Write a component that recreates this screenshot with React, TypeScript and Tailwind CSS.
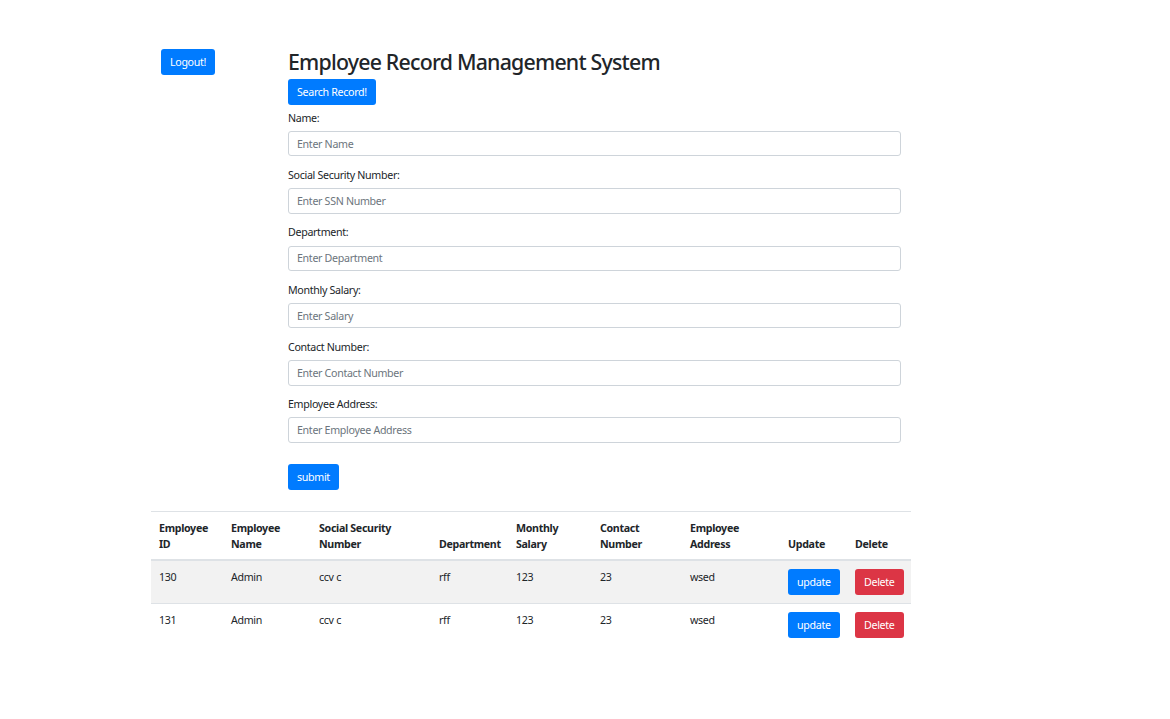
import React from "react";

const rows = [
  { id: "130", name: "Admin", ssn: "ccv c", dept: "rff", salary: "123", contact: "23", address: "wsed" },
  { id: "131", name: "Admin", ssn: "ccv c", dept: "rff", salary: "123", contact: "23", address: "wsed" },
];

const fields = [
  { label: "Name:", placeholder: "Enter Name" },
  { label: "Social Security Number:", placeholder: "Enter SSN Number" },
  { label: "Department:", placeholder: "Enter Department" },
  { label: "Monthly Salary:", placeholder: "Enter Salary" },
  { label: "Contact Number:", placeholder: "Enter Contact Number" },
  { label: "Employee Address:", placeholder: "Enter Employee Address" },
];

const btn =
  "block rounded-[3px] px-2 py-1 text-[10.67px] leading-4 text-white border border-transparent";

export default function App() {
  return (
    <div
      className="min-h-screen bg-white text-[#212529] text-[10.67px] leading-4 tracking-[-0.03em]"
      style={{ fontFamily: "'Segoe UI', 'Noto Sans', sans-serif" }}
    >
      <div className="ml-[151px] w-[760px] pt-[49px]">
        <div className="flex">
          <div className="w-[137px] pl-[10px]">
            <button className={`${btn} bg-[#007bff]`}>Logout!</button>
          </div>
          <div className="w-[613px]">
            <h2 className="text-[21.33px] leading-[25.6px] font-medium tracking-[-0.037em]">
              Employee Record Management System
            </h2>
            <button className={`${btn} bg-[#007bff] mt-[4px]`}>Search Record!</button>
            <form className="mt-[5px]">
              {fields.map((f) => (
                <div key={f.label} className="mb-[10.67px]">
                  <label className="block mb-[5.33px]">{f.label}</label>
                  <input
                    className="block w-full h-[25.33px] rounded-[3px] border border-[#ced4da] px-2 text-[10.67px] tracking-[-0.03em] placeholder-[#6c757d] outline-none"
                    placeholder={f.placeholder}
                  />
                </div>
              ))}
              <div className="pt-[11px]">
                <button type="button" className={`${btn} bg-[#007bff]`}>
                  submit
                </button>
              </div>
            </form>
          </div>
        </div>

        <table className="mt-[21px] w-[760px] table-fixed border-collapse text-left">
          <colgroup>
            <col className="w-[72px]" />
            <col className="w-[88px]" />
            <col className="w-[120px]" />
            <col className="w-[77px]" />
            <col className="w-[84px]" />
            <col className="w-[90px]" />
            <col className="w-[98px]" />
            <col className="w-[67px]" />
            <col className="w-[64px]" />
          </colgroup>
          <thead>
            <tr className="border-t border-[#dee2e6] border-b-2">
              {[
                "Employee ID",
                "Employee Name",
                "Social Security Number",
                "Department",
                "Monthly Salary",
                "Contact Number",
                "Employee Address",
                "Update",
                "Delete",
              ].map((h) => (
                <th key={h} className="px-2 pt-2 pb-[7px] align-bottom font-bold">
                  {h}
                </th>
              ))}
            </tr>
          </thead>
          <tbody>
            {rows.map((r, i) => (
              <tr
                key={r.id}
                className={`border-t border-[#dee2e6] ${i % 2 === 0 ? "bg-[#f2f2f2]" : ""}`}
              >
                <td className="p-2 align-top">{r.id}</td>
                <td className="p-2 align-top">{r.name}</td>
                <td className="p-2 align-top">{r.ssn}</td>
                <td className="p-2 align-top">{r.dept}</td>
                <td className="p-2 align-top">{r.salary}</td>
                <td className="p-2 align-top">{r.contact}</td>
                <td className="p-2 align-top">{r.address}</td>
                <td className="p-2 align-top">
                  <button className={`${btn} bg-[#007bff]`}>update</button>
                </td>
                <td className="p-2 align-top">
                  <button className={`${btn} bg-[#dc3545]`}>Delete</button>
                </td>
              </tr>
            ))}
          </tbody>
        </table>
      </div>
    </div>
  );
}
